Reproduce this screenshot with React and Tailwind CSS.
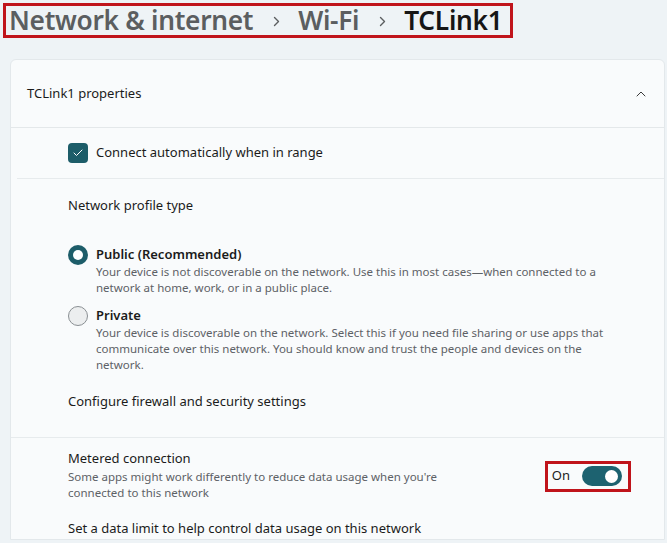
import React from 'react';
import { ChevronUp, Check } from 'lucide-react';

const font = { fontFamily: '"Noto Sans", "Open Sans", sans-serif' };

function Radio({ checked }) {
    return checked ? (
        <span className="mt-[1px] flex h-5 w-5 shrink-0 items-center justify-center rounded-full bg-[#1d5d69]">
            <span className="h-[10px] w-[10px] rounded-full bg-white" />
        </span>
    ) : (
        <span className="mt-[1px] h-5 w-5 shrink-0 rounded-full border border-[#8a8f93] bg-[#eceeef]" />
    );
}

function ProfileOption({ checked, title, children }) {
    return (
        <div className="flex gap-2">
            <Radio checked={checked} />
            <div>
                <div className="text-[13px] font-semibold leading-[20px] text-[#1b1b1b]">{title}</div>
                <p className="text-[11.5px] leading-4 text-[#5d6166]">{children}</p>
            </div>
        </div>
    );
}

function Crumb() {
    return (
        <svg className="ml-[20px] mr-[18px] mt-[2px] h-[11px] w-[7px] shrink-0 text-[#5b5e60]" viewBox="0 0 7 11" fill="none">
            <path d="M1.5 1.5 L5.5 5.5 L1.5 9.5" stroke="currentColor" strokeWidth="1.4" strokeLinecap="round" strokeLinejoin="round" />
        </svg>
    );
}

export default function App() {
    return (
        <div className="h-[543px] w-[667px] overflow-hidden bg-[#eef3f6]" style={font}>
            <div className="pl-[3px] pt-[3px]">
                <div className="inline-flex h-[35px] items-center border-[3px] border-[#c0141b] pl-[3px] pr-[8px] text-[26.3px] font-semibold tracking-[-0.3px]">
                    <span className="text-[#5b5e60]">Network &amp; internet</span>
                    <Crumb />
                    <span className="text-[#5b5e60]">Wi-Fi</span>
                    <Crumb />
                    <span className="text-[#161616]">TCLink1</span>
                </div>
            </div>

            <div className="ml-[10px] mr-[2px] mt-[21px] rounded-t-md border border-[#e3e8eb] bg-[#f9fbfc]">
                <div className="flex h-[67px] items-center justify-between pl-4 pr-[15px]">
                    <span className="text-[13px] text-[#1b1b1b]">TCLink1 properties</span>
                    <ChevronUp className="h-4 w-4 text-[#3a3a3a]" strokeWidth={1.5} />
                </div>
                <div className="border-t border-[#e4e8ea]" />

                <div className="flex h-[50px] items-center gap-2 pl-[57px]">
                    <span className="flex h-5 w-5 items-center justify-center rounded-[4px] bg-[#1d5d69]">
                        <Check className="h-3 w-3 text-white" strokeWidth={2} />
                    </span>
                    <span className="text-[13px] text-[#1b1b1b]">Connect automatically when in range</span>
                </div>
                <div className="ml-[6px] border-t border-[#e7ebed]" />

                <div className="pl-[57px] pr-10">
                    <div className="pt-[15px] text-[13px] leading-[22px] text-[#1b1b1b]">Network profile type</div>
                    <div className="mt-[28px]">
                        <ProfileOption checked title="Public (Recommended)">
                            Your device is not discoverable on the network. Use this in most cases—when connected to a network at home, work, or in a public place.
                        </ProfileOption>
                    </div>
                    <div className="mt-[9px]">
                        <ProfileOption title="Private">
                            Your device is discoverable on the network. Select this if you need file sharing or use apps that communicate over this network. You should know and trust the people and devices on the network.
                        </ProfileOption>
                    </div>
                    <div className="mt-[17px] text-[13px] leading-[22px] text-[#1b1b1b]">Configure firewall and security settings</div>
                </div>
                <div className="mt-[25px] border-t border-[#e7ebed]" />

                <div className="flex items-center justify-between pl-[57px] pr-[33px] pt-[9px]">
                    <div>
                        <div className="text-[13px] leading-[22px] text-[#1b1b1b]">Metered connection</div>
                        <p className="w-[400px] text-[11.5px] leading-4 text-[#5d6166]">
                            Some apps might work differently to reduce data usage when you're connected to this network
                        </p>
                    </div>
                    <div className="mt-[4px] flex h-[31px] items-center gap-3 border-[3px] border-[#c0141b] pl-[4px] pr-[6px]">
                        <span className="text-[13px] text-[#1b1b1b]">On</span>
                        <span className="flex h-5 w-10 items-center justify-end rounded-full bg-[#1d6270] pr-[4px]">
                            <span className="h-[13px] w-[13px] rounded-full bg-white" />
                        </span>
                    </div>
                </div>
                <div className="pl-[57px] pt-[16px] text-[13px] leading-[22px] text-[#1b1b1b]">
                    Set a data limit to help control data usage on this network
                </div>
            </div>
        </div>
    );
}
